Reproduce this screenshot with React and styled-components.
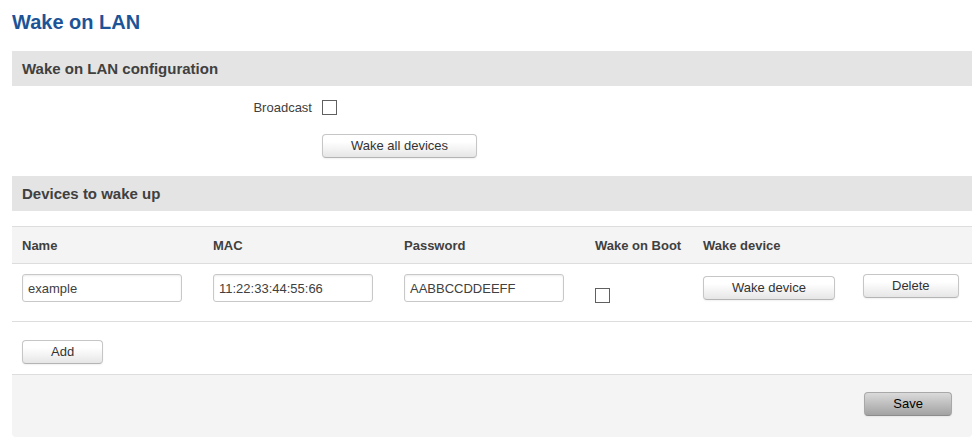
import React, { useState } from "react";
import styled, { createGlobalStyle } from "styled-components";

const GlobalStyle = createGlobalStyle`
  body {
    margin: 0;
    background: #ffffff;
    color: #404040;
    font-family: "Liberation Sans", Arial, sans-serif;
    font-size: 13px;
    line-height: 18px;
  }
`;

const Page = styled.main`
  padding: 10px 8px 7px 12px;
`;

const Title = styled.h1`
  margin: 0 0 17px;
  color: #1c5497;
  font-size: 20px;
  line-height: 24px;
`;

const SectionTitle = styled.h2`
  margin: 0;
  padding: 0 10px;
  background: #e4e4e4;
  font-size: 15px;
  line-height: 35px;
`;

const Fields = styled.div`
  display: grid;
  grid-template-columns: 300px 1fr;
  column-gap: 10px;
  row-gap: 17px;
  padding: 11px 0 18px;
  align-items: center;
  justify-items: start;
`;

const FieldLabel = styled.label`
  justify-self: end;
  padding-top: 2px;
`;

const Checkbox = styled.input`
  appearance: none;
  display: block;
  box-sizing: border-box;
  width: 15px;
  height: 15px;
  margin: 0;
  border: 1px solid #606060;
  background: #ffffff;

  &:checked {
    background: #606060;
    box-shadow: inset 0 0 0 2px #ffffff;
  }
`;

const Button = styled.button`
  display: block;
  box-sizing: border-box;
  height: 24px;
  padding: 0 28px;
  border: 1px solid #c6c6c6;
  border-bottom-color: #b4b4b4;
  border-radius: 4px;
  background: linear-gradient(#ffffff 30%, #e6e6e6);
  box-shadow: 0 1px 2px rgba(0, 0, 0, 0.06);
  color: #333333;
  font: inherit;
  white-space: nowrap;
  cursor: pointer;
`;

const SaveButton = styled(Button)`
  border-color: #a8a8a8;
  border-bottom-color: #8c8c8c;
  background: linear-gradient(#dadada, #a2a2a2);
  color: #000000;
`;

const Table = styled.table`
  width: 100%;
  margin-top: 15px;
  border-collapse: separate;
  border-spacing: 0;
  table-layout: fixed;
`;

const Col = styled.col`
  width: ${(props) => props.$width};
`;

const HeadCell = styled.th`
  padding: 10px 10px 8px;
  border-top: 1px solid #dddddd;
  border-bottom: 1px solid #dddddd;
  background: #f4f4f4;
  text-align: left;
  white-space: nowrap;
`;

const Cell = styled.td`
  padding: ${(props) => props.$top || "10px"} 10px 10px;
  border-bottom: 1px solid #dddddd;
  vertical-align: top;
`;

const InputCell = styled(Cell)`
  padding-right: 21px;
  padding-bottom: 19px;
`;

const TextInput = styled.input`
  display: block;
  box-sizing: border-box;
  width: 100%;
  height: 28px;
  padding: 0 5px;
  border: 1px solid #c8c8c8;
  border-radius: 3px;
  box-shadow: inset 0 1px 2px rgba(0, 0, 0, 0.08);
  color: #404040;
  font: inherit;
`;

const AddBar = styled.div`
  padding: 18px 10px 10px;
`;

const Footer = styled.footer`
  display: flex;
  justify-content: flex-end;
  padding: 17px 20px 21px;
  border-top: 1px solid #dddddd;
  border-radius: 0 0 4px 4px;
  background: #f4f4f4;
`;

function DeviceRow(props) {
  const { device, onChange, onDelete } = props;

  return (
    <tr>
      <InputCell>
        <TextInput
          aria-label="Name"
          value={device.name}
          onChange={(e) => onChange({ ...device, name: e.target.value })}
        />
      </InputCell>
      <InputCell>
        <TextInput
          aria-label="MAC"
          value={device.mac}
          onChange={(e) => onChange({ ...device, mac: e.target.value })}
        />
      </InputCell>
      <InputCell>
        <TextInput
          aria-label="Password"
          value={device.password}
          onChange={(e) => onChange({ ...device, password: e.target.value })}
        />
      </InputCell>
      <Cell $top="24px">
        <Checkbox
          type="checkbox"
          aria-label="Wake on Boot"
          checked={device.boot}
          onChange={(e) => onChange({ ...device, boot: e.target.checked })}
        />
      </Cell>
      <Cell $top="12px">
        <Button type="button">Wake device</Button>
      </Cell>
      <Cell>
        <Button type="button" onClick={onDelete}>
          Delete
        </Button>
      </Cell>
    </tr>
  );
}

function App() {
  const [broadcast, setBroadcast] = useState(false);
  const [devices, setDevices] = useState([
    {
      id: 1,
      name: "example",
      mac: "11:22:33:44:55:66",
      password: "AABBCCDDEEFF",
      boot: false,
    },
  ]);

  function updateDevice(changed) {
    setDevices(devices.map((d) => (d.id === changed.id ? changed : d)));
  }

  function addDevice() {
    const id = Math.max(0, ...devices.map((d) => d.id)) + 1;
    setDevices([...devices, { id, name: "", mac: "", password: "", boot: false }]);
  }

  return (
    <Page>
      <GlobalStyle />
      <Title>Wake on LAN</Title>

      <SectionTitle>Wake on LAN configuration</SectionTitle>
      <Fields>
        <FieldLabel htmlFor="broadcast">Broadcast</FieldLabel>
        <Checkbox
          id="broadcast"
          type="checkbox"
          checked={broadcast}
          onChange={(e) => setBroadcast(e.target.checked)}
        />
        <span />
        <Button type="button">Wake all devices</Button>
      </Fields>

      <SectionTitle>Devices to wake up</SectionTitle>
      <Table>
        <colgroup>
          <Col $width="191px" />
          <Col $width="191px" />
          <Col $width="191px" />
          <Col $width="108px" />
          <Col $width="160px" />
          <Col $width="auto" />
        </colgroup>
        <thead>
          <tr>
            <HeadCell>Name</HeadCell>
            <HeadCell>MAC</HeadCell>
            <HeadCell>Password</HeadCell>
            <HeadCell>Wake on Boot</HeadCell>
            <HeadCell>Wake device</HeadCell>
            <HeadCell aria-label="Actions" />
          </tr>
        </thead>
        <tbody>
          {devices.map((device) => (
            <DeviceRow
              key={device.id}
              device={device}
              onChange={updateDevice}
              onDelete={() => setDevices(devices.filter((d) => d.id !== device.id))}
            />
          ))}
        </tbody>
      </Table>
      <AddBar>
        <Button type="button" onClick={addDevice}>
          Add
        </Button>
      </AddBar>

      <Footer>
        <SaveButton type="button">Save</SaveButton>
      </Footer>
    </Page>
  );
}

export default App;
